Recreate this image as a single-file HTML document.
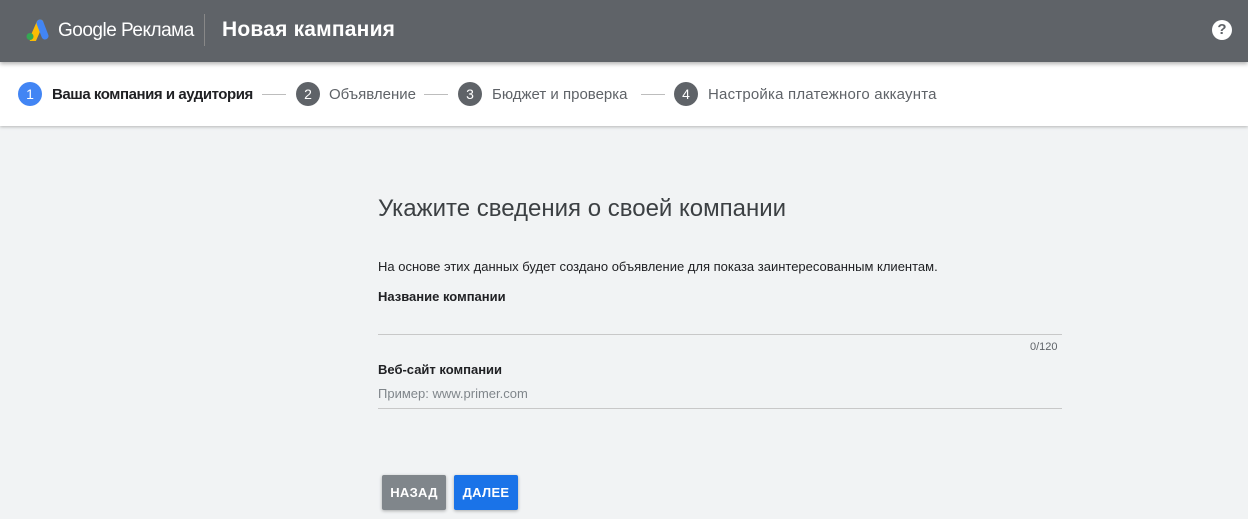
<!DOCTYPE html>
<html><head><meta charset="utf-8"><style>
*{margin:0;padding:0;box-sizing:border-box}
body{width:1248px;height:519px;overflow:hidden;background:#f1f3f4;font-family:"Liberation Sans",Arial,sans-serif;position:relative}
.top{position:absolute;left:0;top:0;width:1248px;height:62px;background:#5f6368;box-shadow:0 2px 4px rgba(0,0,0,.3);z-index:2}
.steps{position:absolute;left:0;top:62px;width:1248px;height:64px;background:#fff;box-shadow:0 1px 3px rgba(0,0,0,.25);z-index:1}
.c{position:absolute;width:24px;height:24px;border-radius:50%;color:#fff;font-size:14px;text-align:center;line-height:24px;top:20px}
.s{position:absolute;top:24px;font-size:15px;color:#5f6368}
.ln{position:absolute;top:32px;height:1px;background:#bdbdbd;width:24px}
.t{position:absolute}
.btn{position:absolute;top:475px;height:35px;border-radius:2px;color:#fff;font-size:13px;font-weight:bold;text-align:center;line-height:35px;box-shadow:0 1px 3px rgba(0,0,0,.3);letter-spacing:.3px}
</style></head><body>
<div class="top">
<svg style="position:absolute;left:25px;top:19px" width="24" height="22" viewBox="0 0 24 22"><path d="M8 20 L15 4" stroke="#fbbc04" stroke-width="7" stroke-linecap="round"/><path d="M15 4 L20 17" stroke="#4285f4" stroke-width="7" stroke-linecap="round"/><circle cx="5" cy="17.5" r="3.5" fill="#34a853"/></svg>
<div class="t" style="left:58px;top:20px;color:#fff;font-size:19px;letter-spacing:-.5px">Google Реклама</div>
<div class="t" style="left:204px;top:14px;width:1px;height:32px;background:#888"></div>
<div class="t" style="left:222px;top:18px;color:#fff;font-size:21px;font-weight:bold;letter-spacing:.2px">Новая кампания</div>
<div class="t" style="left:1212px;top:20px;width:20px;height:20px;border-radius:50%;background:#fff;color:#5f6368;font-weight:bold;font-size:15px;text-align:center;line-height:20px">?</div>
</div>
<div class="steps">
<div class="c" style="left:18px;background:#4285f4">1</div>
<div class="s" style="left:52px;color:#202124;font-weight:bold;letter-spacing:-.45px">Ваша компания и аудитория</div>
<div class="ln" style="left:262px"></div>
<div class="c" style="left:296px;background:#5f6368">2</div>
<div class="s" style="left:329px">Объявление</div>
<div class="ln" style="left:424px"></div>
<div class="c" style="left:458px;background:#5f6368">3</div>
<div class="s" style="left:492px">Бюджет и проверка</div>
<div class="ln" style="left:641px"></div>
<div class="c" style="left:674px;background:#5f6368">4</div>
<div class="s" style="left:708px;letter-spacing:.2px">Настройка платежного аккаунта</div>
</div>
<div class="t" style="left:378px;top:195px;font-size:24px;color:#3c4043">Укажите сведения о своей компании</div>
<div class="t" style="left:378px;top:259px;font-size:13px;color:#202124">На основе этих данных будет создано объявление для показа заинтересованным клиентам.</div>
<div class="t" style="left:378px;top:289px;font-size:13px;font-weight:bold;color:#202124">Название компании</div>
<div class="t" style="left:378px;top:334px;width:684px;height:1px;background:#c8c8c8"></div>
<div class="t" style="left:1030px;top:341px;font-size:11px;color:#5f6368">0/120</div>
<div class="t" style="left:378px;top:362px;font-size:13px;font-weight:bold;color:#202124">Веб-сайт компании</div>
<div class="t" style="left:378px;top:386px;font-size:13px;color:#80868b">Пример: www.primer.com</div>
<div class="t" style="left:378px;top:408px;width:684px;height:1px;background:#c8c8c8"></div>
<div class="btn" style="left:382px;width:64px;background:#80868b">НАЗАД</div>
<div class="btn" style="left:454px;width:64px;background:#1a73e8">ДАЛЕЕ</div>
</body></html>
